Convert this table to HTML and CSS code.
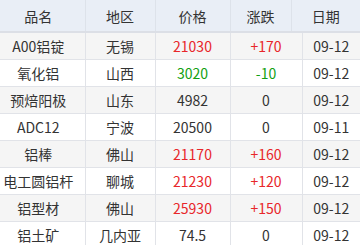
FILE: index.html
```html
<!DOCTYPE html>
<html lang="zh">
<head>
<meta charset="utf-8">
<link rel="stylesheet" href="styles.css">
</head>
<body>
<div class="quotes">
  <table class="head">
    <colgroup><col class="c1"><col class="c2"><col class="c3"><col class="h4"><col class="h5"></colgroup>
    <tr><th class="first">品名</th><th>地区</th><th>价格</th><th>涨跌</th><th>日期</th></tr>
  </table>
  <table class="body">
    <colgroup><col class="c1"><col class="c2"><col class="c3"><col class="b4"><col class="b5"></colgroup>
    <tr><td class="first">A00铝锭</td><td>无锡</td><td class="up">21030</td><td class="up">+170</td><td>09-12</td></tr>
    <tr><td class="first">氧化铝</td><td>山西</td><td class="down">3020</td><td class="down">-10</td><td>09-12</td></tr>
    <tr><td class="first">预焙阳极</td><td>山东</td><td>4982</td><td>0</td><td>09-12</td></tr>
    <tr><td class="first">ADC12</td><td>宁波</td><td>20500</td><td>0</td><td>09-11</td></tr>
    <tr><td class="first">铝棒</td><td>佛山</td><td class="up">21170</td><td class="up">+160</td><td>09-12</td></tr>
    <tr><td class="first">电工圆铝杆</td><td>聊城</td><td class="up">21230</td><td class="up">+120</td><td>09-12</td></tr>
    <tr><td class="first">铝型材</td><td>佛山</td><td class="up">25930</td><td class="up">+150</td><td>09-12</td></tr>
    <tr><td class="first">铝土矿</td><td>几内亚</td><td>74.5</td><td>0</td><td>09-12</td></tr>
  </table>
</div>
</body>
</html>
```
FILE: styles.css
```css
html, body {
  margin: 0;
  padding: 0;
  background: #ffffff;
}
body {
  font-family: "Noto Sans CJK SC", "Noto Sans", sans-serif;
  font-size: 14px;
  color: #333333;
  overflow: hidden;
}
.quotes {
  width: 360px;
}
table {
  width: 360px;
  border-collapse: collapse;
  table-layout: fixed;
}
.c1 { width: 85px; }
.c2 { width: 70px; }
.c3 { width: 75px; }
.h4 { width: 61px; }
.h5 { width: 69px; }
.b4 { width: 72px; }
.b5 { width: 58px; }
th, td {
  text-align: center;
  padding: 0;
  white-space: nowrap;
  line-height: 20px;
}
th {
  height: 31px;
  font-weight: normal;
  background: #e9eef6;
  border-left: 1px solid #dde2ea;
  border-bottom: 2px solid #dcdfe6;
  color: #333333;
}
td {
  height: 26px;
  border-left: 1px solid #e1e3e8;
  border-bottom: 1px solid #e1e3e8;
}
th.first, td.first {
  border-left: none;
  padding-right: 8px;
}
.body tr:nth-child(odd) td {
  background: #f5f5f5;
}
.up { color: #e8262a; }
.down { color: #12a012; }
```
